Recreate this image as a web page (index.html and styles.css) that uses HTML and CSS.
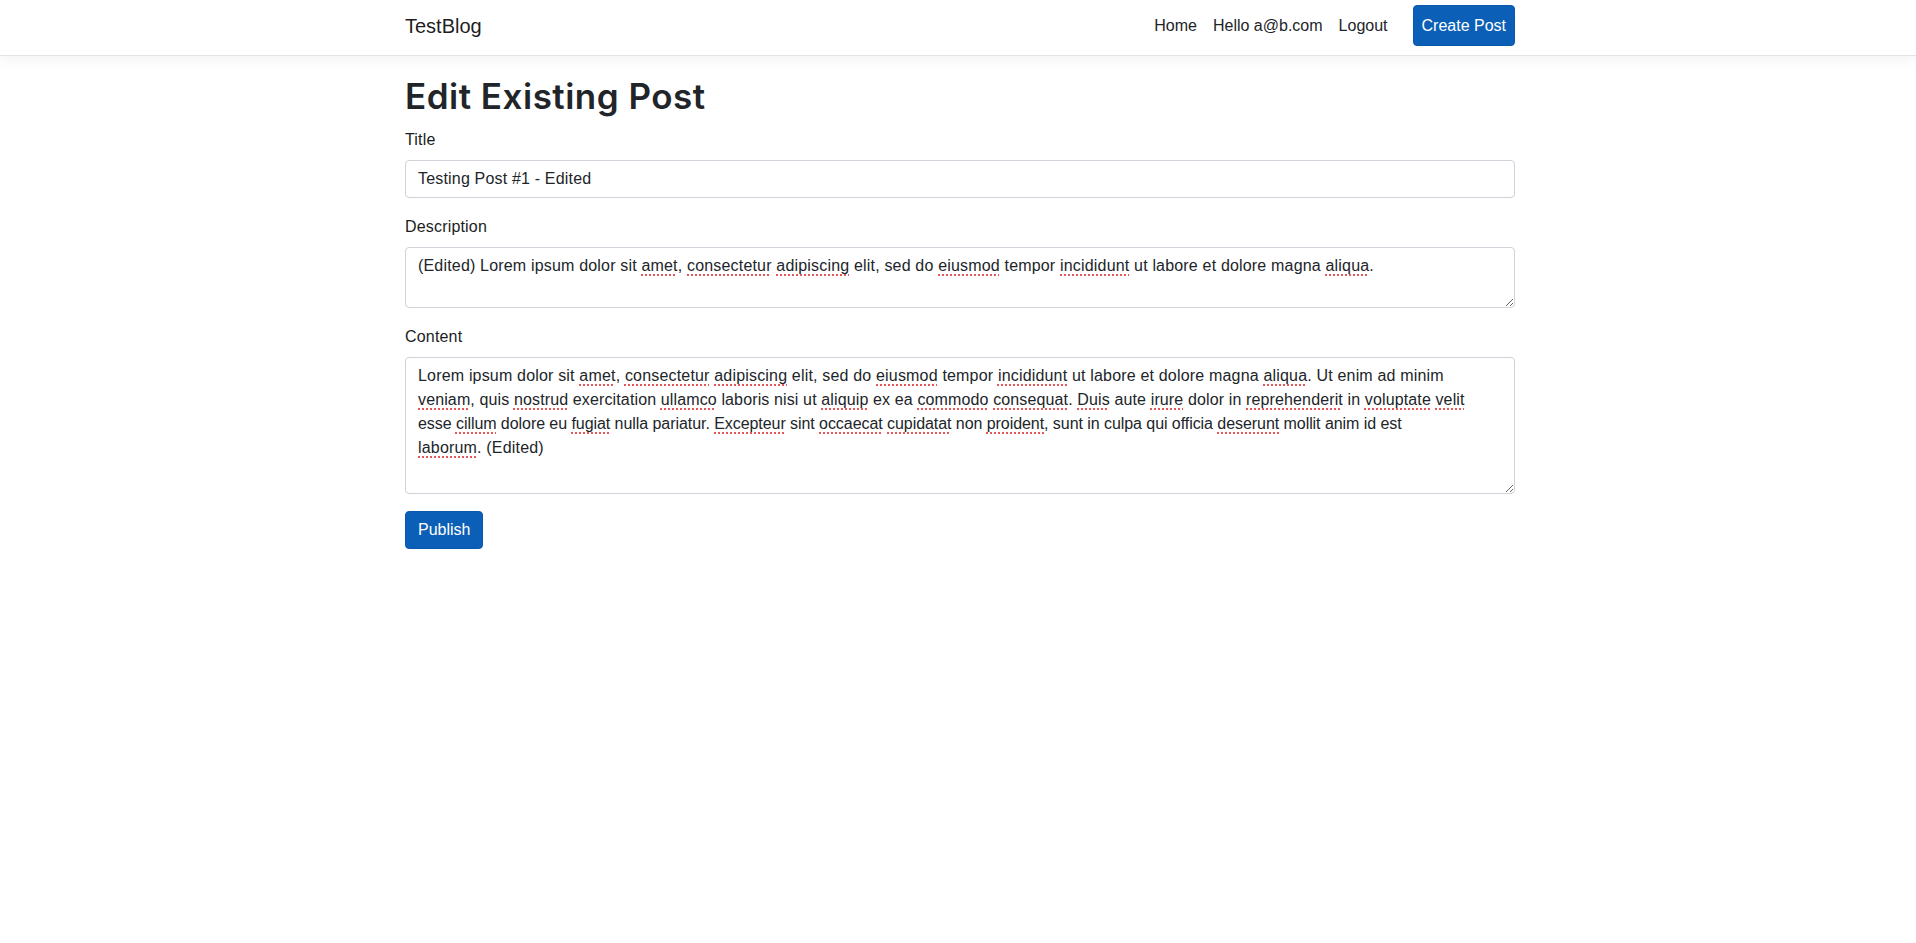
FILE: index.html
```html
<!DOCTYPE html>
<html lang="en">
<head>
<meta charset="utf-8">
<title>Edit Existing Post - TestBlog</title>
<link rel="stylesheet" href="styles.css">
</head>
<body>
<header class="navbar">
  <div class="container nav-inner">
    <a class="brand" href="#">TestBlog</a>
    <nav class="nav-links">
      <a class="nav-link" href="#">Home</a>
      <a class="nav-link" href="#">Hello a@b.com</a>
      <a class="nav-link" href="#">Logout</a>
      <a class="btn btn-primary nav-btn" href="#">Create Post</a>
    </nav>
  </div>
</header>
<main class="container page">
  <h1 class="page-title">Edit Existing Post</h1>
  <form class="post-form">
    <div class="field">
      <label class="field-label" for="title">Title</label>
      <input class="control" id="title" type="text" value="Testing Post #1 - Edited">
    </div>
    <div class="field">
      <label class="field-label">Description</label>
      <div class="control area area-desc" role="textbox" aria-multiline="true">(Edited) Lorem ipsum dolor sit <span class="sp">amet</span>, <span class="sp">consectetur</span> <span class="sp">adipiscing</span> elit, sed do <span class="sp">eiusmod</span> tempor <span class="sp">incididunt</span> ut labore et dolore magna <span class="sp">aliqua</span>.</div>
    </div>
    <div class="field">
      <label class="field-label">Content</label>
      <div class="control area area-content" role="textbox" aria-multiline="true"><span class="ln ln-1">Lorem ipsum dolor sit <span class="sp">amet</span>, <span class="sp">consectetur</span> <span class="sp">adipiscing</span> elit, sed do <span class="sp">eiusmod</span> tempor <span class="sp">incididunt</span> ut labore et dolore magna <span class="sp">aliqua</span>. Ut enim ad minim</span><br><span class="ln ln-2"><span class="sp">veniam</span>, quis <span class="sp">nostrud</span> exercitation <span class="sp">ullamco</span> laboris nisi ut <span class="sp">aliquip</span> ex ea <span class="sp">commodo</span> <span class="sp">consequat</span>. <span class="sp">Duis</span> aute <span class="sp">irure</span> dolor in <span class="sp">reprehenderit</span> in <span class="sp">voluptate</span> <span class="sp">velit</span></span><br><span class="ln ln-3">esse <span class="sp">cillum</span> dolore eu <span class="sp">fugiat</span> nulla pariatur. <span class="sp">Excepteur</span> sint <span class="sp">occaecat</span> <span class="sp">cupidatat</span> non <span class="sp">proident</span>, sunt in culpa qui officia <span class="sp">deserunt</span> mollit anim id est</span><br><span class="ln ln-4"><span class="sp">laborum</span>. (Edited)</span></div>
    </div>
    <button class="btn btn-primary publish" type="button">Publish</button>
  </form>
</main>
</body>
</html>
```
FILE: styles.css
```css
* { box-sizing: border-box; }

html, body {
  margin: 0;
  padding: 0;
  background: #fff;
}

body {
  font-family: "Liberation Sans", Arial, sans-serif;
  font-size: 16px;
  line-height: 24px;
  color: #212529;
}

a { text-decoration: none; }

.container {
  max-width: 1144px;
  margin: 0 auto;
  padding: 0 15px 0 19px;
}

/* navbar */
.navbar {
  background: #fff;
  border-bottom: 1px solid #e3e3e3;
  box-shadow: 0 4px 12px rgba(0, 0, 0, 0.05);
}

.nav-inner {
  display: flex;
  align-items: center;
  justify-content: space-between;
  padding-top: 5px;
  padding-bottom: 9px;
}

.brand {
  font-size: 20px;
  line-height: 30px;
  color: rgba(0, 0, 0, 0.9);
}

.nav-links {
  display: flex;
  align-items: center;
}

.nav-link {
  color: #212529;
  padding: 0 8px;
  line-height: 24px;
}

.nav-btn {
  margin-left: 17px;
  height: 41px;
  padding: 0 8px;
}

/* buttons */
.btn {
  display: inline-flex;
  align-items: center;
  justify-content: center;
  font-family: inherit;
  font-size: 16px;
  line-height: 24px;
  border: 1px solid transparent;
  border-radius: 4px;
  cursor: pointer;
}

.btn-primary {
  color: #fff;
  background: #0b5fb7;
  border-color: #0a59ad;
}

.publish {
  height: 38px;
  padding: 0 12px;
}

/* page */
.page {
  padding-top: 20px;
}

.page-title {
  font-family: Inter, "Liberation Sans", sans-serif;
  font-weight: 600;
  font-size: 35px;
  line-height: 40px;
  letter-spacing: 0.5px;
  margin: 0 0 12px;
  color: #212529;
}

.post-form {
  display: flex;
  flex-direction: column;
  align-items: flex-start;
}

.field {
  width: 100%;
  margin-bottom: 17px;
}

.field-label {
  display: block;
  margin-bottom: 8px;
  letter-spacing: 0.18px;
  color: #1c1c1e;
}

.control {
  display: block;
  width: 100%;
  font-family: inherit;
  font-size: 16px;
  line-height: 24px;
  letter-spacing: 0.18px;
  color: #212529;
  background: #fff;
  border: 1px solid #ced4da;
  border-radius: 4px;
  padding: 6px 12px;
}

input.control { height: 38px; }

.area {
  overflow: auto;
  resize: vertical;
}

.area-desc { height: 61px; }
.area-content { height: 137px; }

.ln { white-space: nowrap; }
.ln-2 { letter-spacing: 0.13px; }
.ln-3 { letter-spacing: -0.06px; }

.sp {
  text-decoration-line: underline;
  text-decoration-style: dotted;
  text-decoration-color: rgba(226, 58, 64, 0.85);
  text-decoration-thickness: 2px;
  text-underline-offset: 3px;
}
```
